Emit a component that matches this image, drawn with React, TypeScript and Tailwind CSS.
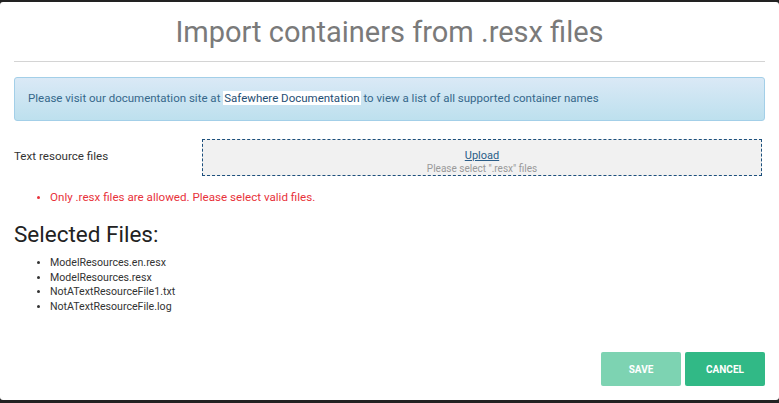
export default function App() {
  const files = [
    "ModelResources.en.resx",
    "ModelResources.resx",
    "NotATextResourceFile1.txt",
    "NotATextResourceFile.log",
  ];

  return (
    <div className="h-[403px] w-[779px] overflow-hidden bg-[#222222] pt-[2px] font-['Roboto',sans-serif]">
      <div className="flex h-[398px] flex-col rounded-[3px] bg-white px-[14px]">
        <div className="flex h-[60px] items-center justify-center border-b border-[#d4d4d4] pt-[2px]">
          <h1 className="text-[29px] leading-none font-normal text-[#7a7a7a]">Import containers from .resx files</h1>
        </div>

        <div className="mt-[15px] flex h-[44px] items-center rounded-[3px] border border-[#a3cfe8] bg-gradient-to-b from-[#dae9f6] to-[#bde0ee] px-[13px] text-[11.5px] text-[#36688b]">
          <span>
            Please visit our documentation site at{" "}
            <a className="bg-white px-[1px] text-[#1f4e74]">Safewhere Documentation</a> to view a list of all supported container names
          </span>
        </div>

        <div className="mt-[18px] flex items-center">
          <label className="w-[188px] pb-[2px] text-[11.6px] text-[#333333]">Text resource files</label>
          <div className="flex h-[37px] w-[560px] flex-col items-center justify-end border border-dashed border-[#1c4f7c] bg-[#f1f1f1]">
            <a className="text-[11px] leading-[14px] text-[#2a5d88] underline">Upload</a>
            <span className="text-[10px] leading-[12px] text-[#9a9a9a]">Please select ".resx" files</span>
          </div>
        </div>

        <ul className="mt-[13px] list-disc pl-[36px] text-[11.6px] text-[#e8323b] marker:text-[10px]">
          <li>Only .resx files are allowed. Please select valid files.</li>
        </ul>

        <h2 className="mt-[14px] text-[22.5px] leading-[28px] text-[#222222]">Selected Files:</h2>
        <ul className="mt-[8px] list-disc pl-[36px] text-[10.6px] leading-[14.5px] text-[#333333] marker:text-[10px]">
          {files.map((f) => (
            <li key={f}>{f}</li>
          ))}
        </ul>

        <div className="mt-auto mb-[14px] flex justify-end gap-[4px]">
          <button className="h-[34px] w-[80px] rounded-[2px] bg-[#7dd3b2] text-[10px] font-bold text-white">SAVE</button>
          <button className="h-[34px] w-[80px] rounded-[2px] bg-[#31b986] text-[10px] font-bold text-white">CANCEL</button>
        </div>
      </div>
    </div>
  );
}
